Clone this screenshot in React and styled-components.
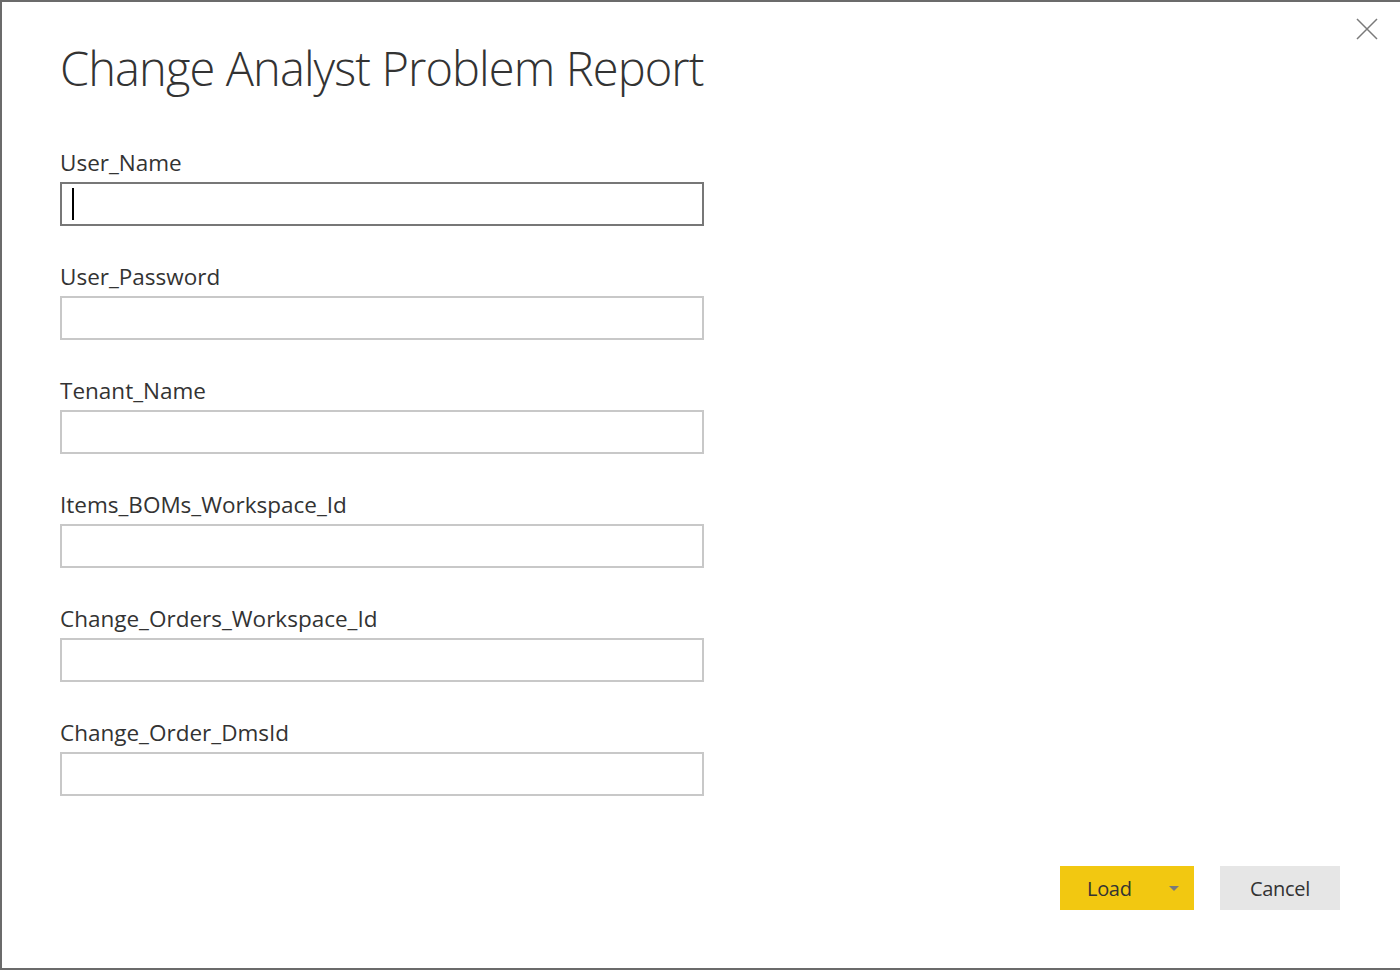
import styled, { createGlobalStyle } from "styled-components";

const GlobalStyle = createGlobalStyle`
  html, body {
    margin: 0;
    padding: 0;
    background: #ffffff;
  }
  * { box-sizing: border-box; }
`;

const fields = [
  "User_Name",
  "User_Password",
  "Tenant_Name",
  "Items_BOMs_Workspace_Id",
  "Change_Orders_Workspace_Id",
  "Change_Order_DmsId",
];

const App = () => {
  return (
    <>
      <GlobalStyle />
      <Dialog>
        <CloseButton aria-label="Close">
          <svg width="22" height="22" viewBox="0 0 22 22">
            <path d="M1 1 L21 21 M21 1 L1 21" stroke="#7a7a7a" strokeWidth="1.5" fill="none" />
          </svg>
        </CloseButton>

        <Title>Change Analyst Problem Report</Title>

        <Form>
          {fields.map((name, i) => (
            <Field key={name}>
              <Label>{name}</Label>
              <Input focused={i === 0}>{i === 0 && <Caret />}</Input>
            </Field>
          ))}
        </Form>

        <Footer>
          <LoadButton>
            <span>Load</span>
            <Arrow />
          </LoadButton>
          <CancelButton>Cancel</CancelButton>
        </Footer>
      </Dialog>
    </>
  );
};

export default App;

const Dialog = styled.div`
  position: relative;
  width: 1400px;
  height: 970px;
  border-top: 2px solid #6b6b6b;
  border-left: 2px solid #6b6b6b;
  border-bottom: 2px solid #6b6b6b;
  padding: 0 0 0 58px;
  display: flex;
  flex-direction: column;
  font-family: "Segoe UI", "Open Sans", "Noto Sans", sans-serif;
  color: #333333;
`;

const CloseButton = styled.div`
  position: absolute;
  top: 16px;
  right: 22px;
  width: 22px;
  height: 22px;
  display: flex;
`;

const Title = styled.h1`
  margin: 36px 0 0;
  font-size: 47px;
  line-height: 60px;
  font-weight: 300;
  color: #333333;
  letter-spacing: -0.9px;
`;

const Form = styled.div`
  display: flex;
  flex-direction: column;
  gap: 39px;
  margin-top: 53px;
`;

const Field = styled.div`
  display: flex;
  flex-direction: column;
  gap: 7px;
`;

const Label = styled.div`
  font-size: 22.5px;
  line-height: 24px;
  color: #333333;
`;

const Input = styled.div`
  width: 644px;
  height: 44px;
  border: 2px solid ${(p) => (p.focused ? "#777777" : "#c8c8c8")};
  background: #ffffff;
  display: flex;
  align-items: center;
  padding-left: 10px;
`;

const Caret = styled.div`
  width: 2px;
  height: 32px;
  background: #000000;
`;

const Footer = styled.div`
  margin-top: auto;
  margin-bottom: 58px;
  display: flex;
  justify-content: flex-end;
  gap: 26px;
  padding-right: 60px;
`;

const BaseButton = styled.div`
  height: 44px;
  display: flex;
  align-items: center;
  font-size: 20px;
  color: #333333;
  letter-spacing: -0.3px;
`;

const LoadButton = styled(BaseButton)`
  width: 134px;
  background: #f2c811;
  padding-left: 27px;
  padding-right: 15px;
  justify-content: space-between;
`;

const Arrow = styled.div`
  width: 0;
  height: 0;
  border-left: 5px solid transparent;
  border-right: 5px solid transparent;
  border-top: 5px solid #7a7a7a;
`;

const CancelButton = styled(BaseButton)`
  width: 120px;
  background: #e6e6e6;
  justify-content: center;
`;
